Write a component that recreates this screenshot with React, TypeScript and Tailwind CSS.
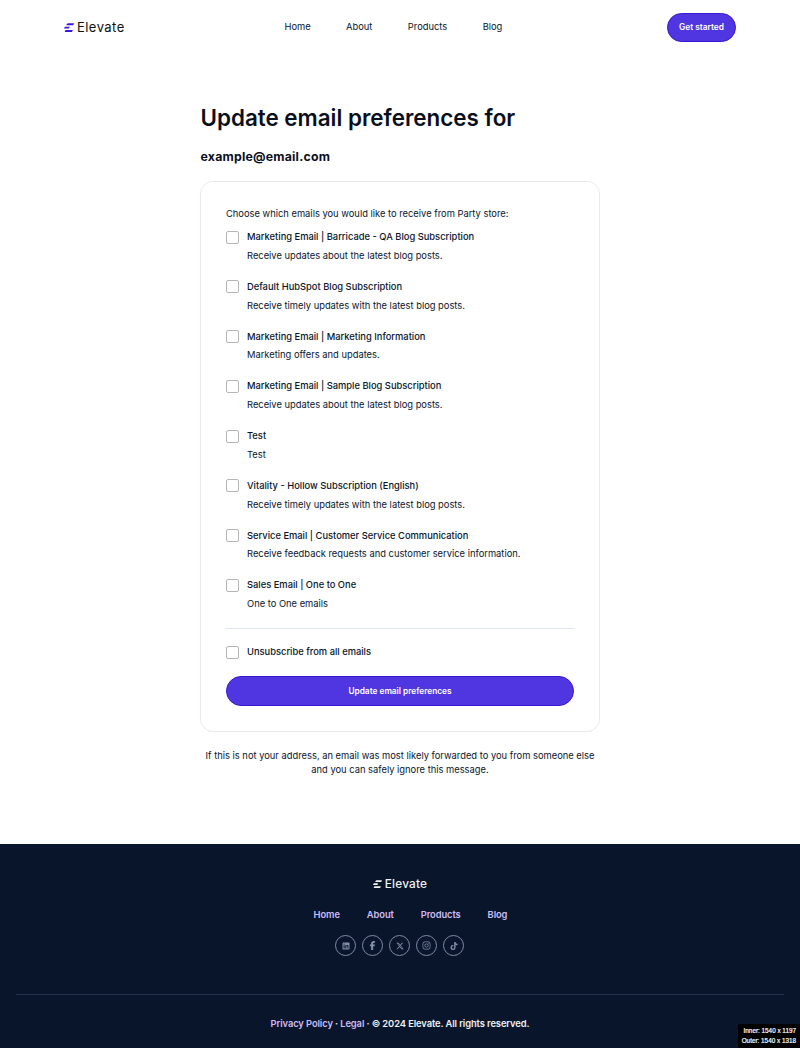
import type { ReactNode } from "react";
import { FaLinkedin, FaFacebookF, FaInstagram, FaTiktok, FaXTwitter } from "react-icons/fa6";

const subscriptions = [
  { title: "Marketing Email | Barricade - QA Blog Subscription", text: "Receive updates about the latest blog posts." },
  { title: "Default HubSpot Blog Subscription", text: "Receive timely updates with the latest blog posts." },
  { title: "Marketing Email | Marketing Information", text: "Marketing offers and updates." },
  { title: "Marketing Email | Sample Blog Subscription", text: "Receive updates about the latest blog posts." },
  { title: "Test", text: "Test" },
  { title: "Vitality - Hollow Subscription (English)", text: "Receive timely updates with the latest blog posts." },
  { title: "Service Email | Customer Service Communication", text: "Receive feedback requests and customer service information." },
  { title: "Sales Email | One to One", text: "One to One emails" },
];

function Mark({ className }: { className: string }) {
  return (
    <svg viewBox="0 0 20 18" className={className} fill="currentColor">
      <path d="M4.6 4.4C5.6 1.6 7 0.6 9 0.6H20L18.6 4.4ZM0 11 1.6 7.4H11.4L9.8 11ZM1.4 17.8 3 14H17.6L16 17.8Z" />
    </svg>
  );
}

function Checkbox() {
  return <input type="checkbox" className="mt-[0.5px] block size-[13px] shrink-0 appearance-none rounded-[2px] border border-[#b5b5b5] bg-white" />;
}

function Social({ label, children }: { label: string; children: ReactNode }) {
  return (
    <a href="#" aria-label={label} className="flex size-[21px] items-center justify-center rounded-full border border-[#7f8ba2] text-[#8490a8]">
      {children}
    </a>
  );
}

export default function App() {
  return (
    <div className="relative flex h-[1048px] w-[800px] flex-col overflow-hidden bg-white font-['Inter',sans-serif] text-[#09152b]">
      <header className="flex h-[54px] shrink-0 items-center pr-16 pl-16">
        <a href="#" className="flex w-[220.5px] items-center gap-[3px]">
          <Mark className="h-[9px] w-[10px] text-[#3b16e0]" />
          <span className="pt-px text-[13px] leading-none tracking-[0.45px] text-[#111]">Elevate</span>
        </a>
        <nav className="flex grow gap-[35.4px] text-[9.35px] leading-none">
          <a href="#">Home</a>
          <a href="#">About</a>
          <a href="#">Products</a>
          <a href="#">Blog</a>
        </nav>
        <button className="h-[29px] w-[69px] rounded-full border border-[#3b16d0] bg-[#4f36e0] text-[8.3px] font-semibold text-white">Get started</button>
      </header>

      <main className="mx-auto flex h-[790px] w-[400px] shrink-0 flex-col">
        <h1 className="mt-[48px] ml-[0.5px] text-[22.4px] leading-[32px] font-semibold whitespace-nowrap text-[#0a0f1e]">Update email preferences for</h1>
        <h2 className="mt-[15px] ml-[0.5px] text-[12.3px] leading-[16px] font-bold tracking-[0.22px] text-[#0a0f1e]">example@email.com</h2>
        <form className="mt-[16px] flex h-[551px] flex-col rounded-[13px] border border-[#e6eaf0] px-[25px] pt-[25px]">
          <p className="h-[23px] text-[9.35px] leading-[14px] whitespace-nowrap">Choose which emails you would like to receive from Party store:</p>
          {subscriptions.map((item) => (
            <div key={item.title} className="flex h-[49.75px] shrink-0 gap-2">
              <Checkbox />
              <div className="text-[9.35px] whitespace-nowrap">
                <div className="leading-[14px] font-medium">{item.title}</div>
                <div className="mt-[4.8px] leading-[14px]">{item.text}</div>
              </div>
            </div>
          ))}
          <hr className="border-[#dfe7ee]" />
          <label className="mt-[16px] flex h-[31px] gap-2 text-[9.35px] leading-[14px] font-medium">
            <Checkbox />
            Unsubscribe from all emails
          </label>
          <button className="h-[30px] shrink-0 rounded-full border border-[#3b16d0] bg-[#4f36e0] text-[8.3px] font-semibold text-white">Update email preferences</button>
        </form>
        <p className="mt-[16.5px] text-center text-[9.35px] leading-[14.6px] whitespace-nowrap">
          If this is not your address, an email was most likely forwarded to you from someone else
          <br />
          and you can safely ignore this message.
        </p>
      </main>

      <footer className="flex h-[204px] shrink-0 flex-col items-center bg-[#09152b]">
        <a href="#" className="mt-[33px] flex h-[14px] items-center gap-[3px] text-[#f1f1f1]">
          <Mark className="h-[8px] w-[9px]" />
          <span className="pt-px text-[11.8px] leading-none font-medium tracking-[0.2px]">Elevate</span>
        </a>
        <nav className="mt-[17px] ml-[21px] flex gap-[27px] text-[9.35px] leading-[14px] font-semibold tracking-[-0.09px] text-[#cdbdf5]">
          <a href="#">Home</a>
          <a href="#">About</a>
          <a href="#">Products</a>
          <a href="#">Blog</a>
        </nav>
        <div className="mt-[13px] mr-px flex gap-[6px]">
          <Social label="LinkedIn"><FaLinkedin className="size-[8px]" /></Social>
          <Social label="Facebook"><FaFacebookF className="size-[9px]" /></Social>
          <Social label="X"><FaXTwitter className="size-[8px]" /></Social>
          <Social label="Instagram"><FaInstagram className="size-[9px]" /></Social>
          <Social label="TikTok"><FaTiktok className="size-[8px]" /></Social>
        </div>
        <hr className="mt-[38px] w-[768px] border-[#253149]" />
        <p className="mt-[22px] text-[9.35px] leading-[14px] font-semibold tracking-[-0.09px] whitespace-nowrap text-[#f0f1f5]">
          <a href="#" className="text-[#cdbdf5]">Privacy Policy</a> · <a href="#" className="text-[#cdbdf5]">Legal</a> · © 2024 Elevate. All rights reserved.
        </p>
      </footer>

      <div className="absolute right-0 bottom-0 h-6 w-[62px] rounded-tl-[2px] bg-black pt-[2px] pr-[4px] text-right font-['Liberation_Sans',sans-serif] text-[6.35px] leading-[10px] whitespace-nowrap text-white [-webkit-text-stroke:0.2px_white]">
        Inner: 1540 x 1197
        <br />
        Outer: 1540 x 1318
      </div>
    </div>
  );
}
